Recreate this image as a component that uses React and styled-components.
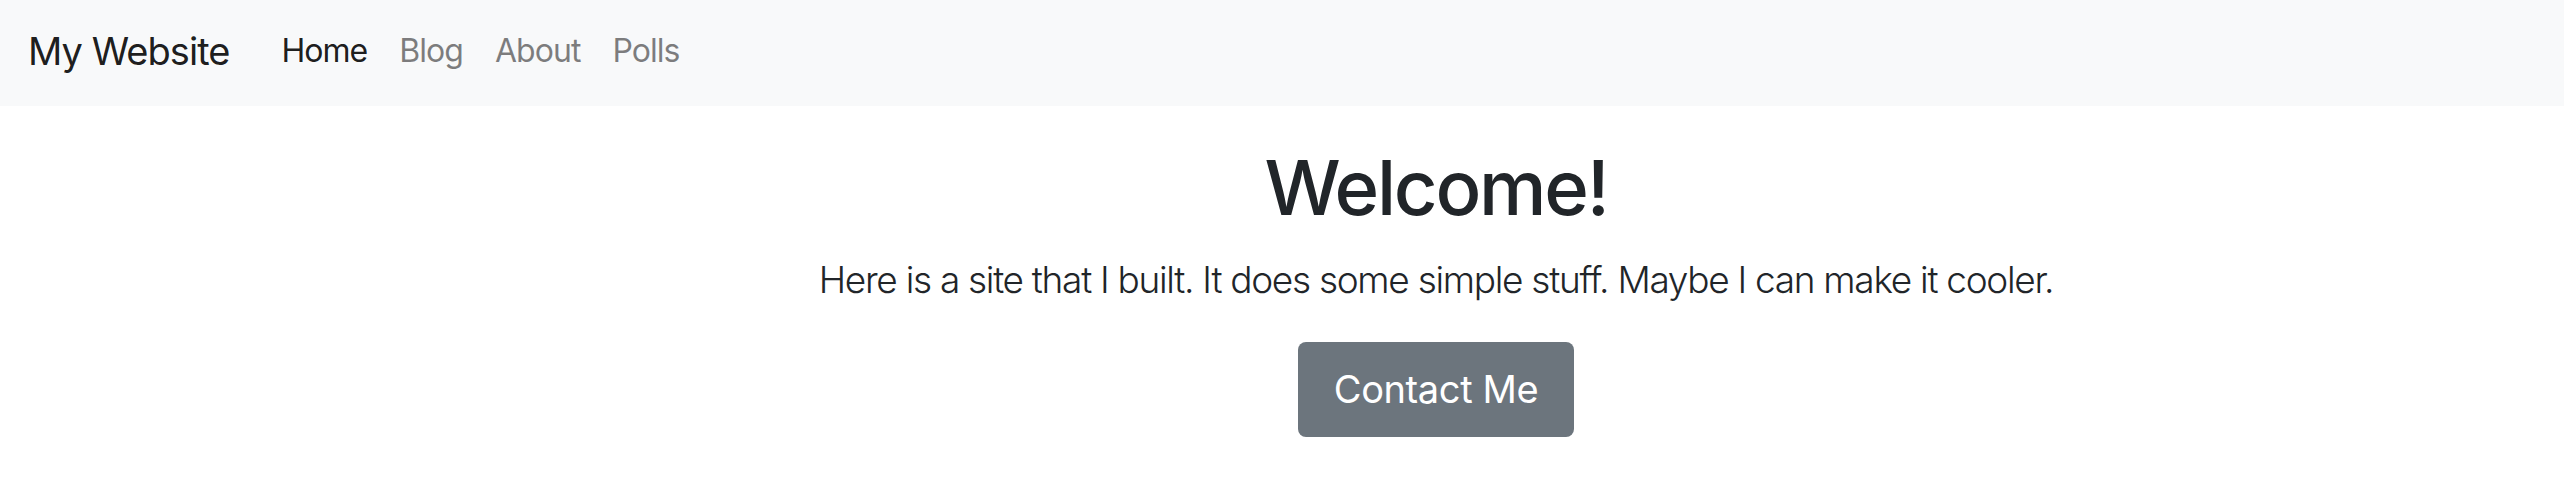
import React from "react";
import styled, { createGlobalStyle } from "styled-components";

const GlobalStyle = createGlobalStyle`
  html, body {
    margin: 0;
    padding: 0;
    background: #fff;
    font-family: Inter, "Noto Sans", "Liberation Sans", sans-serif;
    color: #212529;
  }
`;

const Navbar = styled.nav`
  height: 106px;
  box-sizing: border-box;
  padding: 0 28px 4px;
  display: flex;
  align-items: center;
  background: #f8f9fa;
`;

const Brand = styled.a`
  font-size: 38px;
  line-height: 1.5;
  letter-spacing: -0.025em;
  color: rgba(0, 0, 0, 0.9);
  text-decoration: none;
  margin-right: 36px;
`;

const NavList = styled.div`
  display: flex;
  align-items: center;
`;

const NavLink = styled.a`
  font-size: 32px;
  line-height: 1.5;
  letter-spacing: -0.03em;
  padding: 0 16px;
  text-decoration: none;
  color: ${props => (props.$active ? "rgba(0, 0, 0, 0.9)" : "rgba(0, 0, 0, 0.5)")};
`;

const Hero = styled.main`
  display: flex;
  flex-direction: column;
  align-items: center;
  text-align: center;
  padding: 36px 0 0 308px;
`;

const Title = styled.h1`
  margin: 0 0 18px;
  font-size: 76px;
  line-height: 91px;
  font-weight: 500;
  letter-spacing: -0.03em;
  color: #212529;
`;

const Lead = styled.p`
  margin: 0 0 34px;
  font-size: 37px;
  line-height: 57px;
  font-weight: 300;
  letter-spacing: -0.035em;
  color: #212529;
`;

const Button = styled.button`
  height: 95px;
  padding: 0 36px;
  font-family: inherit;
  font-size: 38px;
  line-height: 1.5;
  letter-spacing: -0.01em;
  color: #fff;
  background: #6c757d;
  border: none;
  border-radius: 8px;
`;

export default function App() {
  const links = ["Home", "Blog", "About", "Polls"];
  return (
    <>
      <GlobalStyle />
      <Navbar>
        <Brand href="#">My Website</Brand>
        <NavList>
          {links.map((l, i) => (
            <NavLink key={l} href="#" $active={i === 0}>
              {l}
            </NavLink>
          ))}
        </NavList>
      </Navbar>
      <Hero>
        <Title>Welcome!</Title>
        <Lead>Here is a site that I built. It does some simple stuff. Maybe I can make it cooler.</Lead>
        <Button>Contact Me</Button>
      </Hero>
    </>
  );
}
